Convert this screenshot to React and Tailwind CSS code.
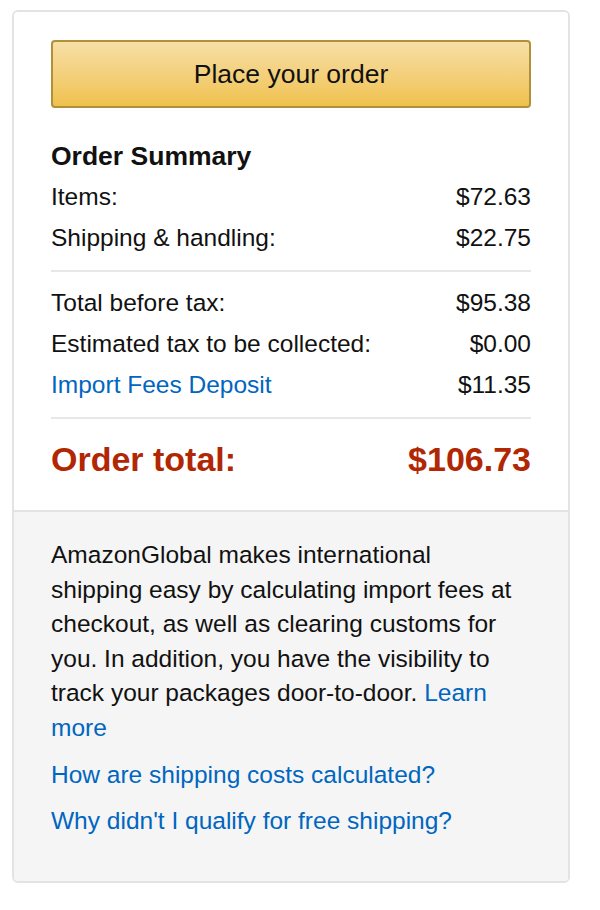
import React from 'react';

export default function App() {
  const top = [
    { label: 'Items:', value: '$72.63' },
    { label: 'Shipping & handling:', value: '$22.75' },
  ];
  const middle = [
    { label: 'Total before tax:', value: '$95.38' },
    { label: 'Estimated tax to be collected:', value: '$0.00' },
    { label: 'Import Fees Deposit', value: '$11.35', link: true },
  ];

  return (
    <div className="min-h-[910px] bg-white pt-[10px] pl-[12px] font-['Liberation_Sans',Arial,sans-serif] text-[24.5px] text-[#111]">
      <div className="w-[558px] rounded-[6px] border-2 border-[#e3e3e3] overflow-hidden">
        {/* Summary */}
        <div className="px-[37px] pt-[28px] pb-[22px] bg-white">
          <button className="w-full h-[68px] rounded-[4px] border-2 border-[#b0913a] bg-gradient-to-b from-[#f7dfa5] to-[#f0c14b] text-[26.5px] text-[#111] leading-none">
            Place your order
          </button>

          <h3 className="mt-[28px] h-[41px] flex items-center font-bold text-[26.5px]">Order Summary</h3>
          {top.map((r) => (
            <div key={r.label} className="h-[41px] flex items-center justify-between">
              <span>{r.label}</span>
              <span>{r.value}</span>
            </div>
          ))}

          <div className="my-[11px] border-t-2 border-[#e7e7e7]" />

          {middle.map((r) => (
            <div key={r.label} className="h-[41px] flex items-center justify-between">
              <span className={r.link ? 'text-[#0066c0]' : ''}>{r.label}</span>
              <span>{r.value}</span>
            </div>
          ))}

          <div className="mt-[11px] border-t-2 border-[#e7e7e7]" />

          <div className="h-[58px] mt-[11px] flex items-center justify-between font-bold text-[34px] text-[#b12704]">
            <span>Order total:</span>
            <span>$106.73</span>
          </div>
        </div>

        {/* AmazonGlobal info */}
        <div className="border-t-2 border-[#e3e3e3] bg-[#f5f5f5] px-[37px] pt-[26px] pb-[42px] leading-[34.6px]">
          <p className="w-[472px]">
            AmazonGlobal makes international shipping easy by calculating import fees at checkout, as well as
            clearing customs for you. In addition, you have the visibility to track your packages door-to-door.{' '}
            <a className="text-[#0066c0]" href="#">Learn more</a>
          </p>
          <a className="block mt-[12px] text-[#0066c0]" href="#">How are shipping costs calculated?</a>
          <a className="block mt-[12px] text-[#0066c0]" href="#">Why didn't I qualify for free shipping?</a>
        </div>
      </div>
    </div>
  );
}
